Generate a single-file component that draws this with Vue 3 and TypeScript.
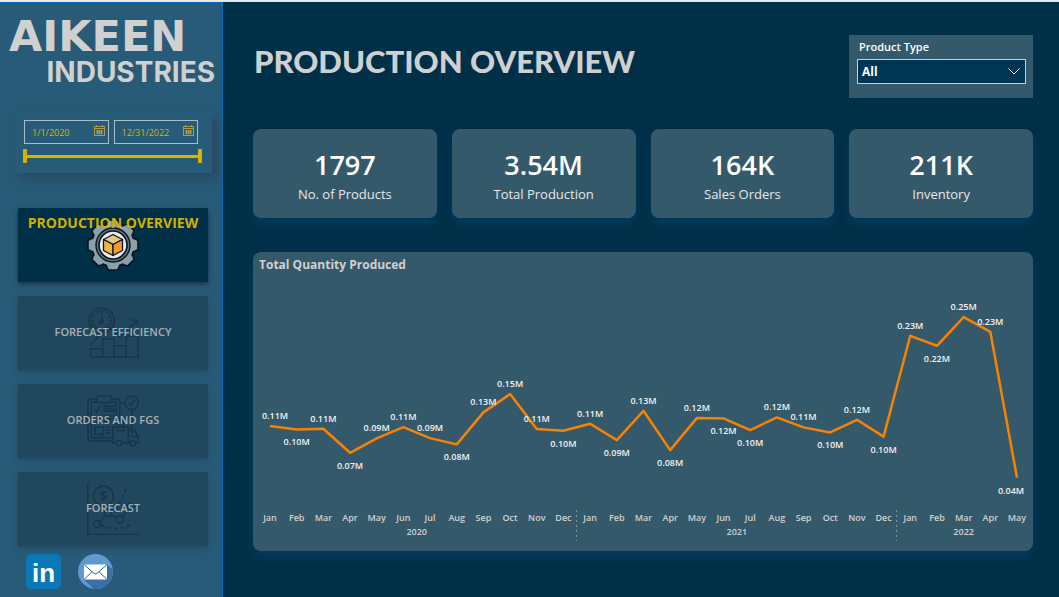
<script setup lang="ts">
import { computed, ref } from 'vue'

interface YearSeries {
  year: number
  quantities: number[]
}

interface Kpi {
  value: string
  label: string
}

const MONTHS = ['Jan', 'Feb', 'Mar', 'Apr', 'May', 'Jun', 'Jul', 'Aug', 'Sep', 'Oct', 'Nov', 'Dec']

const kpis: Kpi[] = [
  { value: '1797', label: 'No. of Products' },
  { value: '3.54M', label: 'Total Production' },
  { value: '164K', label: 'Sales Orders' },
  { value: '211K', label: 'Inventory' },
]

// Quantities in thousands of units, by month.
const series: YearSeries[] = [
  { year: 2020, quantities: [109.2, 104.8, 105.6, 73.6, 92.8, 107.9, 93.2, 84.8, 127.5, 151.9, 105.2, 102.9] },
  { year: 2021, quantities: [112.3, 90.5, 129.6, 77.2, 119.9, 119.5, 103.9, 120.8, 107.5, 100.8, 117.6, 95.1] },
  { year: 2022, quantities: [229.6, 216.3, 254.5, 234.9, 40.3] },
]

const labelsBelow = new Set([1, 3, 7, 11, 13, 15, 17, 18, 21, 23, 25, 28])

const CHART_W = 780
const FIRST_X = 17
const LAST_X = 764
const BASE_Y = 234

const points = computed(() => {
  const flat = series.flatMap((s) => s.quantities)
  const step = (LAST_X - FIRST_X) / (flat.length - 1)
  return flat.map((q, i) => {
    const x = FIRST_X + i * step
    const y = BASE_Y - q * 0.75
    return {
      x,
      y,
      month: MONTHS[i % 12],
      label: (q / 1000).toFixed(2) + 'M',
      labelX: Math.min(Math.max(x, 22), CHART_W - 22),
      labelY: labelsBelow.has(i) ? y + 16 : y - 7,
    }
  })
})

const linePoints = computed(() => points.value.map((p) => `${p.x},${p.y}`).join(' '))

const years = computed(() => {
  let start = 0
  return series.map((s) => {
    const first = points.value[start].x
    start += s.quantities.length
    const last = points.value[start - 1].x
    return { year: s.year, x: (first + last) / 2, end: start < points.value.length ? last + 13 : 0 }
  })
})

const active = ref('overview')
const fromDate = ref('1/1/2020')
const toDate = ref('12/31/2022')
const rangeFrom = ref(0)
const rangeTo = ref(100)
const productType = ref('All')
const teeth = [0, 45, 90, 135, 180, 225, 270, 315]
const ticks = [0, 30, 60, 90, 120, 150, 180, 210, 240, 270, 300, 330]
</script>

<template>
  <div class="page">
    <aside class="sidebar">
      <div class="brand">
        <span class="brand-top">AIKEEN</span>
        <span class="brand-bottom">INDUSTRIES</span>
      </div>

      <section class="slicer" aria-label="Date range">
        <div class="dates">
          <div class="date-box">
            <input v-model="fromDate" type="text" aria-label="Start date" />
            <button type="button" aria-label="Pick start date">
              <svg viewBox="0 0 11 11" width="11" height="11">
                <path d="M.5 1.5h10v9H.5zM.5 3.5h10M2.5 0v2M8.5 0v2M2 6h7M2 8h7M3.5 5v4.500M5.500 5v4.500M7.500 5v4.500" />
              </svg>
            </button>
          </div>
          <div class="date-box">
            <input v-model="toDate" type="text" aria-label="End date" />
            <button type="button" aria-label="Pick end date">
              <svg viewBox="0 0 11 11" width="11" height="11">
                <path d="M.5 1.5h10v9H.5zM.5 3.5h10M2.5 0v2M8.5 0v2M2 6h7M2 8h7M3.5 5v4.500M5.500 5v4.500M7.500 5v4.500" />
              </svg>
            </button>
          </div>
        </div>
        <div class="range">
          <input v-model.number="rangeFrom" type="range" min="0" max="100" aria-label="Range start" />
          <input v-model.number="rangeTo" type="range" min="0" max="100" aria-label="Range end" />
        </div>
      </section>

      <nav class="nav">
        <button type="button" class="tile" :class="{ current: active === 'overview' }" @click="active = 'overview'">
          <svg class="tile-icon" viewBox="0 0 52 52" aria-hidden="true">
            <g fill="#8aa0aa" stroke="#0d151b" stroke-width="1.600" stroke-linejoin="round">
              <path v-for="t in teeth" :key="t" d="M18 7 21.500 1h9L34 7z" :transform="`rotate(${t} 26 26)`" />
              <circle cx="26" cy="26" r="21" />
            </g>
            <g fill="#8aa0aa">
              <path v-for="t in teeth" :key="t" d="M19 8 22.200 2h7.600L33 8z" :transform="`rotate(${t} 26 26)`" />
              <circle cx="26" cy="26" r="20.500" />
            </g>
            <circle cx="26" cy="26" r="17" fill="#5f7480" stroke="#0d151b" stroke-width="1.400" />
            <circle cx="26" cy="26" r="14" fill="#e6edf1" stroke="#0d151b" stroke-width="1.600" />
            <g stroke="#0d151b" stroke-width="1.300" stroke-linejoin="round">
              <path d="M26 15.500l9.500 5-9.500 5-9.500-5z" fill="#e5c77d" />
              <path d="M16.500 20.500l9.500 5V36.500l-9.500-5z" fill="#edb63e" />
              <path d="M35.500 20.500l-9.500 5V36.500l9.500-5z" fill="#f59a2c" />
            </g>
          </svg>
          <span class="tile-label">PRODUCTION OVERVIEW</span>
        </button>

        <button type="button" class="tile" :class="{ current: active === 'efficiency' }" @click="active = 'efficiency'">
          <svg class="tile-icon line" viewBox="0 0 52 52" aria-hidden="true">
            <circle cx="14.700" cy="13.700" r="12.700" />
            <circle cx="14.700" cy="13.700" r="10.300" stroke-width="1" />
            <path v-for="t in ticks" :key="t" d="M14.700 4.500v2" :transform="`rotate(${t} 14.700 13.700)`" />
            <circle cx="14.700" cy="14.500" r="1.600" />
            <path d="M14.700 8v5M13 15.500l-2 2" />
            <path d="M2.300 38.700 21.700 20l11 10 17.600-16.700M44 13.300h6.500v6.500" />
            <path d="M3.700 50.300V41.700h12v8.600M15.700 50.300V31.700H27v18.600M27 38.700h12M39 50.300V29h12v21.300M3 50.300h48.500" />
          </svg>
          <span class="tile-label">FORECAST EFFICIENCY</span>
        </button>

        <button type="button" class="tile" :class="{ current: active === 'orders' }" @click="active = 'orders'">
          <svg class="tile-icon line" viewBox="0 0 52 52" aria-hidden="true">
            <path d="M10 3.700H4a3 3 0 0 0-3 3V43a3 3 0 0 0 3 3h21M24.700 3.700h5a3 3 0 0 1 3 3V31" />
            <path d="M10 7H4.300v35.700H25M24.700 7h4.600v24" />
            <rect x="10" y="1" width="14.700" height="6.500" rx="1.500" />
            <path d="M7.500 14.500l2 2.500 4-6.500M16.500 11h11M16.500 13.500h11M16.500 16h11M7.500 24.500l2 2.500 4-6.500M16.500 21h11M16.500 24h11M16.500 27h8M8 32h8.500v7.500H8zM19 32h5M19 35h5M19 38h5" />
            <circle cx="44.700" cy="7.700" r="6.700" />
            <path d="M41.500 7.700l2.400 2.500 4-5M32.700 7.700H38M44.700 14.500V34M36 31v-9h8.700" />
            <path d="M28.500 48h-2.800V31.700h15.600V48H35M30.500 31.700v4h6v-4M41.300 35.300h6l4 6.700v6h-2.500M45 36v5.500h6M41 48h2" />
            <circle cx="32" cy="48.300" r="2.700" />
            <circle cx="45.700" cy="48.300" r="2.700" />
          </svg>
          <span class="tile-label">ORDERS AND FGS</span>
        </button>

        <button type="button" class="tile" :class="{ current: active === 'forecast' }" @click="active = 'forecast'">
          <svg class="tile-icon line" viewBox="0 0 52 52" aria-hidden="true">
            <path d="M.8.500V51.500H52" />
            <circle cx="16.500" cy="13" r="10" />
            <text x="16.500" y="18" text-anchor="middle" class="dollar">$</text>
            <path d="M39.500 6 28 29" stroke-dasharray="4 2.500" />
            <circle cx="10" cy="41" r="3.500" />
            <circle cx="21" cy="30" r="3.500" />
            <circle cx="32.700" cy="36.500" r="3.500" />
            <circle cx="43.500" cy="24" r="3.500" />
            <path d="M12.500 38.500l6-6M24 31.700l5.500 3M35 34l6-7.500" />
            <path d="M14 42q14 7.500 31-1" stroke-dasharray="4 2.500" />
          </svg>
          <span class="tile-label">FORECAST</span>
        </button>
      </nav>

      <div class="social">
        <a href="#linkedin" aria-label="LinkedIn">
          <svg viewBox="0 0 35 35" width="35" height="35">
            <rect width="35" height="35" rx="5" fill="#0a78b8" />
            <text x="17.500" y="28" text-anchor="middle" class="linkedin">in</text>
          </svg>
        </a>
        <a href="#mail" aria-label="E-mail">
          <svg viewBox="0 0 35 35" width="35" height="35">
            <circle cx="17.500" cy="17.500" r="17.500" fill="#6098d0" />
            <path d="M29 10.500l5.700 5.200A17.500 17.500 0 0 1 15.500 34.900L6 25.500z" fill="#3b70a6" />
            <path d="M6 10.500h23v15H6z" fill="#fff" />
            <path d="M6 10.500l9.500 8.500q2 1.500 4 0l9.500-8.500M6 25.500l8-7.800M29 25.500l-8-7.800" fill="none" stroke="#2f5f92" stroke-width="1" />
          </svg>
        </a>
      </div>
    </aside>

    <main class="main">
      <header class="header">
        <h1>PRODUCTION OVERVIEW</h1>
        <div class="filter">
          <label for="product-type">Product Type</label>
          <div class="select-wrap">
            <select id="product-type" v-model="productType">
              <option>All</option>
            </select>
            <svg viewBox="0 0 12 7" width="12" height="7" aria-hidden="true"><path d="M.5.500 6 6 11.500.500" /></svg>
          </div>
        </div>
      </header>

      <section class="kpis">
        <article v-for="k in kpis" :key="k.label" class="kpi">
          <strong>{{ k.value }}</strong>
          <span>{{ k.label }}</span>
        </article>
      </section>

      <section class="chart">
        <h2>Total Quantity Produced</h2>
        <svg viewBox="0 0 780 275" role="img" aria-label="Total quantity produced by month">
          <polyline :points="linePoints" class="line-path" />
          <g v-for="(p, i) in points" :key="i">
            <text :x="p.labelX" :y="p.labelY" class="value">{{ p.label }}</text>
            <text :x="p.x" y="247" class="axis">{{ p.month }}</text>
          </g>
          <g v-for="y in years" :key="y.year">
            <text :x="y.x" y="261" class="axis">{{ y.year }}</text>
            <line v-if="y.end" :x1="y.end" :x2="y.end" y1="236" y2="267" class="divider" />
          </g>
        </svg>
      </section>
    </main>
  </div>
</template>

<style>
body {
  margin: 0;
  background: #002f48;
}
</style>

<style scoped>
.page {
  box-sizing: border-box;
  display: flex;
  min-height: 100vh;
  border-top: 2px solid #e4eaee;
  background: #002f48;
  font-family: "Open Sans", "Noto Sans", sans-serif;
}

.page *,
.page *::before {
  box-sizing: border-box;
}

button,
input,
select {
  margin: 0;
  padding: 0;
  border: 0;
  background: none;
  color: inherit;
  font: inherit;
}

.sidebar {
  flex: 0 0 223px;
  display: flex;
  flex-direction: column;
  border-top: 1px solid #0a68b8;
  border-right: 1px solid #0a68b8;
  background: #285b78;
}

.brand {
  display: flex;
  flex-direction: column;
  height: 109px;
  padding: 13px 7px 0 9px;
  color: #d0d0d0;
}

.brand-top {
  font: 700 43px/40px "DejaVu Sans", sans-serif;
}

.brand-bottom {
  align-self: flex-end;
  font: 700 28px/32px Inter, sans-serif;
}

.slicer {
  height: 61px;
  margin: 0 10px 0 14px;
  padding: 8px 10px 0 9px;
  background: #285b78;
  box-shadow: 6px 6px 10px rgba(40, 65, 85, 0.7);
  color: #d9b300;
}

.dates {
  display: flex;
  gap: 5px;
  padding: 0 4px 0 1px;
}

.date-box {
  flex: 1;
  display: flex;
  align-items: center;
  min-width: 0;
  height: 24px;
  padding: 0 3px 0 7px;
  border: 1px solid #a9bcc8;
}

.date-box input {
  flex: 1;
  min-width: 0;
  width: 0;
  font-size: 9px;
  outline: none;
}

.date-box button {
  display: flex;
  margin-bottom: 3px;
}

.date-box path {
  fill: none;
  stroke: #c9ac4a;
  stroke-width: 0.8;
}

.range {
  display: grid;
  height: 14px;
  margin-top: 5px;
}

.range::before {
  content: "";
  grid-area: 1 / 1;
  align-self: center;
  height: 3px;
  background: #d9b300;
}

.range input {
  grid-area: 1 / 1;
  width: 100%;
  height: 14px;
  appearance: none;
  pointer-events: none;
}

.range input::-webkit-slider-thumb {
  appearance: none;
  width: 4px;
  height: 14px;
  border-radius: 1px;
  background: #d9b300;
  pointer-events: auto;
}

.nav {
  display: flex;
  flex-direction: column;
  gap: 14px;
  margin-top: 35px;
  padding: 0 14px 0 18px;
}

.tile {
  display: grid;
  place-items: center;
  height: 74px;
  background: #21475f;
  box-shadow: 0 2px 6px rgba(30, 65, 90, 0.7);
  color: #a9b0b5;
  font-size: 11px;
  font-weight: 600;
  line-height: 16px;
  cursor: pointer;
}

.tile-icon {
  grid-area: 1 / 1;
  width: 52px;
  height: 52px;
}

.tile-label {
  grid-area: 1 / 1;
  z-index: 1;
  margin-bottom: 2px;
}

.tile.current {
  background: #002f48;
  box-shadow: 0 2px 5px rgba(20, 40, 55, 0.8);
  color: #d0b000;
  font-size: 14px;
  font-weight: 700;
}

.tile.current .tile-label {
  align-self: start;
  margin-top: 7px;
}

.line {
  fill: none;
  stroke: #17364c;
  stroke-width: 1.5;
}

.dollar {
  fill: #17364c;
  stroke: none;
  font: 600 14px "Open Sans", sans-serif;
}

.linkedin {
  fill: #fff;
  font: 700 26px "Liberation Sans", sans-serif;
}

.social {
  display: flex;
  gap: 17px;
  padding: 8px 26px 0;
}

.social a {
  display: flex;
}

.main {
  flex: 1;
  min-width: 0;
  padding: 33px 26px 20px 30px;
}

.header {
  display: flex;
  align-items: flex-start;
  justify-content: space-between;
}

h1 {
  margin: 6px 0 0 1px;
  color: #d0d0d0;
  font: 900 31px/40px Lato, sans-serif;
  white-space: nowrap;
}

.filter {
  width: 184px;
  height: 63px;
  padding: 4px 7px 0 8px;
  background: #34596b;
  color: #fff;
}

.filter label {
  display: block;
  padding-left: 2px;
  font-size: 11px;
  font-weight: 600;
  line-height: 16px;
}

.select-wrap {
  display: grid;
  align-items: center;
  height: 25px;
  margin-top: 4px;
  border: 1px solid #c3d0d8;
  background: #003654;
}

.select-wrap select {
  grid-area: 1 / 1;
  height: 100%;
  padding-left: 4px;
  appearance: none;
  font-size: 12px;
  font-weight: 700;
}

.select-wrap svg {
  grid-area: 1 / 1;
  justify-self: end;
  margin-right: 5px;
  fill: none;
  stroke: #fff;
  pointer-events: none;
}

.kpis {
  display: grid;
  grid-template-columns: repeat(4, 1fr);
  gap: 15px;
  margin-top: 31px;
}

.kpi {
  display: flex;
  flex-direction: column;
  align-items: center;
  height: 89px;
  padding-top: 18px;
  border-radius: 8px;
  background: #34596b;
  box-shadow: 0 7px 10px #003b5a;
  color: #fff;
}

.kpi strong {
  font-size: 27px;
  font-weight: 600;
  line-height: 36px;
}

.kpi span {
  color: #e8e8e8;
  font-size: 13px;
  line-height: 22px;
}

.chart {
  margin-top: 34px;
  border-radius: 8px;
  background: #34596b;
  box-shadow: 0 7px 12px #003b5a;
}

h2 {
  margin: 0;
  padding: 2px 6px 0;
  color: #d0d0d0;
  font-size: 12px;
  font-weight: 700;
  line-height: 22px;
}

.chart svg {
  display: block;
  width: 100%;
  margin-top: -2px;
  padding-bottom: 2px;
}

.line-path {
  fill: none;
  stroke: #f98200;
  stroke-width: 2.5;
  stroke-linejoin: round;
}

.value,
.axis {
  font-size: 9px;
  font-weight: 600;
  text-anchor: middle;
}

.value {
  fill: #f2f2f2;
}

.axis {
  fill: #d0d0d0;
}

.divider {
  stroke: #8098a4;
  stroke-dasharray: 2 3;
}
</style>
